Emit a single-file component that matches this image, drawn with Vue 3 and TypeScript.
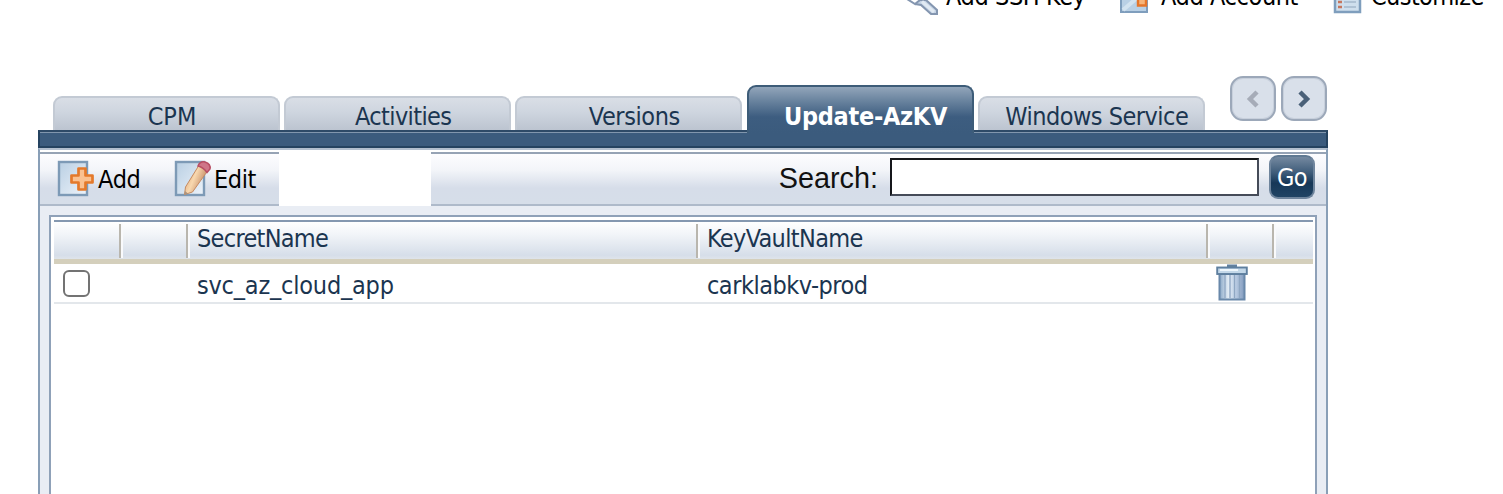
<script setup lang="ts">
import { ref } from 'vue'

interface Tab {
  label: string
  cls: string
}

const tabs: Tab[] = [
  { label: 'CPM', cls: 't-cpm' },
  { label: 'Activities', cls: 't-act' },
  { label: 'Versions', cls: 't-ver' },
  { label: 'Update-AzKV', cls: 't-upd' },
  { label: 'Windows Service', cls: 't-win' },
]
const active = ref(3)
const search = ref('')
const rows = ref([{ secret: 'svc_az_cloud_app', vault: 'carklabkv-prod', checked: false }])
</script>

<template>
  <div class="page">
    <header class="actions">
      <div class="action ssh">
        <svg width="36" height="16" viewBox="0 0 36 16">
          <path d="M4 -1 L12 4 L17 0 L23 0 L34 10 V14 H28 L18 5 L12 4" fill="#c5d3e4" stroke="#8496b0" stroke-width="2" />
          <path d="M19 1.500 L31 12" stroke="#e1eaf3" stroke-width="3" />
        </svg>
        <span>Add SSH Key</span>
      </div>
      <div class="action acc">
        <svg width="36" height="16" viewBox="0 0 36 16">
          <rect x="4" y="-16" width="26" height="28" fill="#b9d0e5" stroke="#7f9ebd" stroke-width="2" />
          <path d="M6 10 L20 -2" stroke="#d3e3f0" stroke-width="4" />
          <path d="M17 -2 H21 V5.500 H29 V-2" fill="#f7b479" stroke="#e5752a" stroke-width="2.400" />
        </svg>
        <span>Add Account</span>
      </div>
      <div class="action cus">
        <svg width="36" height="16" viewBox="0 0 36 16">
          <rect x="5" y="-16" width="25" height="28" fill="#cfdfed" stroke="#7f9ebd" stroke-width="2.500" />
          <path d="M8 2 h4 M8 7 h4" stroke="#c5765e" stroke-width="2.500" />
          <path d="M14 2 h12 M14 7 h12" stroke="#a5b9cc" stroke-width="1.500" />
        </svg>
        <span>Customize</span>
      </div>
    </header>

    <nav class="tabs">
      <button
        v-for="(tab, i) in tabs"
        :key="tab.label"
        class="tab"
        :class="[tab.cls, { active: i === active }]"
        @click="active = i"
      >
        <span>{{ tab.label }}</span>
      </button>
      <div class="pager">
        <button class="page-btn">
          <svg width="18" height="20" viewBox="0 0 18 20"><path d="M13 3 L6 10 L13 17" fill="none" stroke="#a6acb8" stroke-width="4.500" /></svg>
        </button>
        <button class="page-btn">
          <svg width="18" height="20" viewBox="0 0 18 20"><path d="M5 3 L12 10 L5 17" fill="none" stroke="#4a6078" stroke-width="4.500" /></svg>
        </button>
      </div>
    </nav>
    <div class="bar"></div>

    <main class="panel">
      <div class="toolbar">
        <button class="tool add">
          <svg width="40" height="40" viewBox="0 0 40 40">
            <defs>
              <linearGradient id="sq" x1="0" y1="0" x2="1" y2="1">
                <stop offset="0" stop-color="#b9cfe3" /><stop offset="1" stop-color="#edf3fa" />
              </linearGradient>
            </defs>
            <rect x="2" y="2" width="28" height="33" fill="url(#sq)" stroke="#7d9ab6" stroke-width="2.400" />
            <path d="M21.500 8.500 H28.500 V15.500 H35.500 V22.500 H28.500 V29.500 H21.500 V22.500 H14.500 V15.500 H21.500 Z" fill="#fac191" stroke="#e4792b" stroke-width="2.700" stroke-linejoin="round" />
          </svg>
          <span>Add</span>
        </button>
        <button class="tool edit">
          <svg width="40" height="40" viewBox="0 0 40 40">
            <defs>
              <linearGradient id="pen" x1="0" y1="0" x2="1" y2=".5">
                <stop offset="0" stop-color="#d99a68" /><stop offset=".5" stop-color="#f8d8af" /><stop offset="1" stop-color="#bd8059" />
              </linearGradient>
            </defs>
            <rect x="2" y="2" width="28" height="33" fill="url(#sq)" stroke="#7d9ab6" stroke-width="2.400" />
            <path d="M24.500 6 L33.500 11 L18.500 32 L10.500 34.500 L11.500 27 Z" fill="url(#pen)" stroke="#c58b62" stroke-width="1" />
            <path d="M10.300 35 L11 31 L14 33.500 Z" fill="#ad947e" />
            <path d="M24 6 Q26 1 31 2 Q37 4 36 9 L33 12.500 Q29 7 24 6 Z" fill="#cf7588" stroke="#b84e63" stroke-width="1.500" />
          </svg>
          <span>Edit</span>
        </button>
        <div class="blank"></div>
        <label class="search">
          <span>Search:</span>
          <input v-model="search" type="text" />
        </label>
        <button class="go"><span>Go</span></button>
      </div>

      <div class="grid">
        <div class="row head">
          <div class="cell"></div>
          <div class="cell"></div>
          <div class="cell"><span class="h-secret">SecretName</span></div>
          <div class="cell"><span class="h-vault">KeyVaultName</span></div>
          <div class="cell"></div>
          <div class="cell"></div>
        </div>
        <div v-for="row in rows" :key="row.secret" class="row body">
          <div class="check"><input v-model="row.checked" type="checkbox" /></div>
          <div></div>
          <div class="value"><span class="v-secret">{{ row.secret }}</span></div>
          <div class="value"><span class="v-vault">{{ row.vault }}</span></div>
          <div class="trash">
            <svg width="32" height="38" viewBox="0 0 32 38">
              <defs>
                <linearGradient id="can">
                  <stop offset="0" stop-color="#8aa8c7" /><stop offset=".35" stop-color="#e2ecf5" />
                  <stop offset=".65" stop-color="#bacce3" /><stop offset="1" stop-color="#8099bc" />
                </linearGradient>
              </defs>
              <rect x="11" y="0.500" width="10" height="3.500" fill="#61809f" />
              <rect x="3.500" y="10" width="25" height="25.500" fill="url(#can)" stroke="#6988aa" stroke-width="2" />
              <path d="M9 11 V34 M14 11 V34 M18.500 11 V34 M23.500 11 V34" stroke="#8fa7c3" stroke-width="1.300" />
              <rect x="1.200" y="3.500" width="29.600" height="6.500" fill="#c3d8e9" stroke="#5e7f9f" stroke-width="1.900" />
              <path d="M4 6 H22" stroke="#edf6fc" stroke-width="2" />
            </svg>
          </div>
          <div></div>
        </div>
      </div>
    </main>
  </div>
</template>

<style>
body {
  margin: 0;
  background: #fff;
}
</style>

<style scoped>
.page {
  width: 1503px;
  height: 494px;
  overflow: hidden;
  display: flex;
  flex-direction: column;
  font-family: 'DejaVu Sans Condensed', 'DejaVu Sans', sans-serif;
  font-stretch: condensed;
  font-size: 25px;
  color: #1b3550;
  background: #fff;
}
button {
  border: 0;
  padding: 0;
  margin: 0;
  font: inherit;
  color: inherit;
  background: none;
}
svg {
  display: block;
  flex: none;
}
span {
  white-space: nowrap;
}
.actions {
  height: 16px;
  flex: none;
  display: grid;
  grid-template-columns: 215px 212px 190px;
  padding-left: 903px;
  width: 600px;
  color: #000;
}
.action {
  display: flex;
  height: 16px;
}
.action span {
  line-height: 30px;
  margin-top: -18px;
  margin-left: 7px;
  letter-spacing: -0.4px;
}
.action.acc svg {
  margin-left: -1px;
  margin-right: 1px;
}
.cus span {
  margin-left: 5px;
  letter-spacing: -0.6px;
}
.tabs {
  height: 114px;
  flex: none;
  display: flex;
  align-items: flex-end;
  padding-left: 53px;
  gap: 4.2px;
}
.tab {
  box-sizing: border-box;
  width: 227px;
  height: 34px;
  padding-left: 11px;
  border: 2px solid #c3cad4;
  border-bottom: 0;
  border-radius: 9px 9px 0 0;
  background: linear-gradient(#d9dee6, #ced5df 45%, #bcc4d0);
  display: flex;
  align-items: center;
  justify-content: center;
  line-height: 30px;
}
.tab span {
  position: relative;
  top: 3px;
}
.t-act {
  letter-spacing: -0.6px;
}
.t-ver {
  letter-spacing: -0.4px;
}
.t-win {
  letter-spacing: -0.5px;
}
.tab.active {
  position: relative;
  z-index: 1;
  height: 48px;
  margin-bottom: -3px;
  border-color: #3d5c78;
  background: linear-gradient(#92a5ba, #7089a3 25%, #3d5d80 65%, #3b5b7d);
  color: #fff;
  font-weight: bold;
  letter-spacing: -0.3px;
}
.tab.active span {
  top: 7px;
}
.pager {
  display: flex;
  gap: 5px;
  margin-left: 21px;
  align-self: flex-end;
  margin-bottom: 9px;
}
.page-btn {
  box-sizing: border-box;
  width: 46px;
  height: 45px;
  border: 2px solid #9ca8b9;
  border-radius: 13px;
  background: #d9e0ea;
  box-shadow: inset 0 0 0 1px #c8d0dc;
  display: flex;
  align-items: center;
  justify-content: center;
}
.bar {
  box-sizing: border-box;
  flex: none;
  width: 1290px;
  height: 18px;
  margin-left: 38px;
  border: 2px solid #254360;
  border-top-color: #2e4a67;
  background: linear-gradient(#8196ad 0 1px, #3b5b7d 1px);
}
.panel {
  box-sizing: border-box;
  flex: none;
  width: 1290px;
  height: 360px;
  margin-left: 38px;
  border: 2px solid #899fb7;
  border-top: 2px solid #b2bfce;
  background: #e9edf4;
}
.toolbar {
  box-sizing: border-box;
  height: 56px;
  display: flex;
  border-bottom: 2px solid #aebaca;
  background: linear-gradient(#fff 0 2px, #96a3b5 2px 4px, #fdfdff 4px, #f3f5f9 20px, #d6dde9 38px, #d6dee9);
}
.tool {
  display: flex;
  color: #000;
  line-height: 30px;
}
.tool svg {
  margin-top: 10px;
}
.tool span {
  margin-top: 15px;
}
.add {
  width: 134px;
  padding-left: 17px;
}
.edit {
  width: 105px;
}
.add span {
  margin-left: 1px;
  letter-spacing: -0.3px;
}
.edit span {
  letter-spacing: -0.4px;
}
.blank {
  width: 152px;
  height: 56px;
  background: #fff;
}
.search {
  margin-left: auto;
  display: flex;
  font: 28.8px/34px 'Liberation Sans', Arial, sans-serif;
  color: #111;
}
.search span {
  margin-top: 11px;
}
.search input {
  box-sizing: border-box;
  width: 369px;
  height: 38px;
  margin: 8px 0 0 12px;
  border: 2px solid #15171b;
  border-right-color: #454b58;
  border-bottom-color: #454b58;
  border-radius: 0;
  background: #fff;
  outline: 0;
}
.go {
  box-sizing: border-box;
  width: 46px;
  height: 44px;
  margin: 5px 11px 0 10px;
  border: 2px solid #6f859d;
  border-top-color: #607992;
  border-radius: 9px;
  background: linear-gradient(#7589a0, #3d5b79 40%, #163757 65%, #214464);
  color: #fff;
  line-height: 42px;
  letter-spacing: -0.5px;
}
.grid {
  box-sizing: border-box;
  width: 1268px;
  height: 290px;
  margin: 9px 0 0 9px;
  padding: 3px 2px 0 3px;
  border: 2px solid #8fa1b8;
  background: #fff;
}
.row {
  display: grid;
  grid-template-columns: 67px 67px 510px 510px 66px 39px;
}
.head {
  box-sizing: border-box;
  height: 44px;
  border-top: 2px solid #8598b0;
  border-bottom: 5px solid #d4cfbc;
  background: linear-gradient(#fff, #f1f4f8 35%, #d6dee9 90%, #dfe4ea);
}
.cell {
  box-sizing: border-box;
  height: 34px;
  margin-top: 2px;
  border-right: 2px solid #b9b6ae;
  box-shadow: 2px 0 0 #f9fafc;
  line-height: 30px;
  padding-left: 9px;
}
.cell:last-child {
  border: 0;
  box-shadow: none;
}
.h-secret {
  letter-spacing: -0.7px;
}
.h-vault {
  letter-spacing: -0.65px;
}
.v-secret {
  letter-spacing: -0.2px;
}
.v-vault {
  letter-spacing: -0.5px;
}
.body {
  box-sizing: border-box;
  height: 40px;
  border-bottom: 2px solid #e3e7eb;
}
.value {
  padding-left: 9px;
  line-height: 30px;
  padding-top: 7px;
}
.check input {
  appearance: none;
  box-sizing: border-box;
  display: block;
  width: 27px;
  height: 27px;
  margin: 6px 0 0 9px;
  border: 2px solid #737373;
  border-radius: 6px;
  background: #fff;
}
.trash svg {
  margin: 0 0 0 8px;
}
</style>
